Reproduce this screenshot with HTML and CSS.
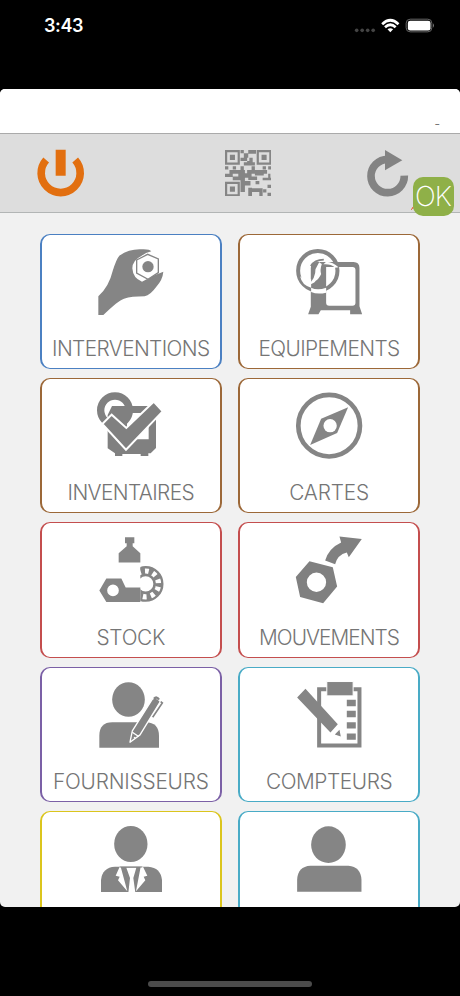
FILE: index.html
```
<!DOCTYPE html>
<html lang="fr">
<head>
<meta charset="utf-8">
<meta name="viewport" content="width=device-width, initial-scale=1">
<title>Menu</title>
<link rel="stylesheet" href="styles.css">
</head>
<body>
<div class="statusbar">
  <span class="clock">3:43</span>
  <svg class="signals" viewBox="1064 50 246 50" aria-hidden="true">
    <g fill="#444"><circle cx="1072" cy="90" r="5.5"/><circle cx="1088.500" cy="90" r="5.500"/><circle cx="1105" cy="90" r="5.500"/><circle cx="1121.500" cy="90" r="5.500"/></g>
    <g fill="none" stroke="#fff" stroke-width="8"><path d="M1148.500 71.500Q1173 48 1197.500 71.500"/><path d="M1157 80.500Q1173 66 1189 80.500"/></g>
    <path fill="#fff" d="M1164.500 87Q1173 80 1181.500 87L1173 95.500Z"/>
    <rect x="1220.500" y="56.500" width="77" height="38" rx="12" fill="none" stroke="#666" stroke-width="3"/>
    <rect x="1225.500" y="61" width="68" height="29.500" rx="7" fill="#fff"/>
    <path fill="#777" d="M1301 69Q1307 76 1301 82Z"/>
  </svg>
</div>
<main class="app">
  <div class="user">-</div>
  <nav class="toolbar">
    <svg class="power" viewBox="108 448 146 146" aria-label="Quitter">
      <path fill="#e26f10" d="M167 450H197V528H167Z"/>
      <path fill="none" stroke="#e26f10" stroke-width="23" d="M138.500 481A58.500 58.500 0 1 0 225.500 481"/>
    </svg>
    <svg class="qr" viewBox="0 0 21 21" shape-rendering="geometricPrecision" aria-label="QR code">
      <g fill="none" stroke="#858585"><path d="M.5.500h5.700v5.700h-5.700zM14.800.500h5.700v5.700h-5.700zM.5 14.800h5.700v5.700h-5.700z"/></g>
      <path fill="#858585" d="M2.200 2.200h2.300v2.300h-2.300zM16.500 2.200h2.300v2.300h-2.300zM2.200 16.500h2.300v2.300h-2.300z
      M7 0h1.500v1.500h-1.500zM10.500 0h3.500v1.700h-3.500zM8.500 1.500h2v2h-2zM7 3.500h3v1.500h-3zM11 3.500h1.500v2h-1.500zM8.500 5.500h5v1.500h-5zM10 5h1v1h-1z
      M0 7.300h1.500v1.500h-1.500zM3.500 7.300h1.500v1.500h-1.500zM7 7.300h1.500v2h-1.500zM12 7.300h1.500v2h-1.500zM17 7.300h1.500v1.500h-1.500zM19.500 7.300h1.500v1.500h-1.500z
      M2 9h7v1.700h-7zM10 9h9v1.700h-9zM0 10.700h3.500v1.500h-3.500zM6 10.500h6v2h-6zM13.500 10.500h4v1h-4z
      M3.500 12h4v1.700h-4zM7 12.500h2v6.500h-2zM10.500 12h4v1.500h-4zM17 12.500h4v1.200h-4zM19.500 10.700h1v2h-1zM9 14h2.500v2h-2.500zM13.800 14h1.700v1.500h-1.700zM19.200 15.700h1.600v1.500h-1.600z
      M10.500 17.300h6.500v1.700h-6.500zM10.500 17h1.700v4h-1.700zM15.500 18h1.500v2.800h-1.500zM19.200 19.300h1.600v1.500h-1.600zM17.200 17.700h1.500v1.500h-1.500z"/>
    </svg>
    <svg class="reload" viewBox="1098 448 130 146" aria-label="Actualiser">
      <path fill="none" stroke="#838383" stroke-width="23" d="M1213 528A50 50 0 1 1 1163 479"/>
      <path fill="#838383" d="M1155 451L1207 482L1155 512Z"/>
    </svg>
    <span class="badge">OK</span>
    <svg class="mark" viewBox="0 0 4 6" aria-hidden="true"><path d="M0 6L3 2M1 4H4" fill="none" stroke="#e6653c"/></svg>
  </nav>
  <section class="menu">
    <a class="card blue">
      <svg class="icon" viewBox="197 62 210 210"><path fill="#858585" d="M204 269V213Q236 184 247 137Q258 101 267 91Q298 70 334 72Q358 71 363 78Q346 82 334 91Q306 105 306 129Q308 159 335 169Q366 150 399 139Q397 163 378 184Q360 209 343 213Q304 213 281 220Q263 226 219 269Z"/><path d="M319 104L352 87L384 101V142L353 162L319 143Z" fill="#fff" stroke="#858585" stroke-width="4"/><circle cx="353" cy="124" r="17" fill="#858585"/></svg>
      <span class="label interventions">INTERVENTIONS</span>
    </a>
    <a class="card brown">
      <svg class="icon" viewBox="192.600 62 210 210"><path fill="#858585" fill-rule="evenodd" d="M243 128Q243 110 261 110H371Q389 110 389 128V243L397 267H361V255H273L266 267H235L243 244ZM289 128V232Q289 241 298 241H368Q377 241 377 232V134Q377 125 368 125H289Z"/><circle cx="264" cy="136" r="59" fill="none" stroke="#858585" stroke-width="12"/><path d="M244 187Q263 197 289 187V202Q263 208 244 200Z" fill="#fff"/><path d="M211 153Q218 162 244 162V187Q216 180 211 153Z" fill="#fff"/><path d="M235 179Q258 158 257 132L268 111L276 116Q270 134 274 146Q267 162 258 166Q252 175 235 179Z" fill="#fff"/><path d="M289 109Q310 110 326 126L317 127Q302 115 281 117Z" fill="#fff"/><path d="M243 122Q254 104 282 103" stroke="#858585" stroke-width="5" fill="none"/></svg>
      <span class="label equipements">EQUIPEMENTS</span>
    </a>
    <a class="card brown">
      <svg class="icon" viewBox="197 60 210 210"><circle cx="254" cy="121" r="43" fill="none" stroke="#808080" stroke-width="22"/><path fill="#808080" fill-rule="evenodd" d="M245 108H362L377 123V234L361 250H354V258H331V252H276V258H254V250L232 235V135ZM290 129V208H355V129Z"/><path fill="#808080" stroke="#fff" stroke-width="6" d="M216 162L244 134L288 174L370 95L397 124L287 239Z"/></svg>
      <span class="label inventaires">INVENTAIRES</span>
    </a>
    <a class="card brown">
      <svg class="icon" viewBox="192.600 60 210 210"><circle cx="298" cy="167" r="92.500" fill="none" stroke="#858585" stroke-width="14"/><path fill="#858585" d="M355 112L274 146L241 225L322 189Z"/><circle cx="301" cy="167" r="20" fill="#fff"/></svg>
      <span class="label cartes">CARTES</span>
    </a>
    <a class="card red">
      <svg class="icon" viewBox="197 58.200 210 210"><path fill="#858585" d="M284 68H312V86H307V95L330 116V144H265V116L289 95V86H284Z"/><clipPath id="bearing"><path d="M330 145H405V270H330Z"/></clipPath><g clip-path="url(#bearing)" fill="none" stroke="#858585"><circle cx="346" cy="208" r="50" stroke-width="7"/><circle cx="346" cy="208" r="27" stroke-width="8"/><circle cx="346" cy="208" r="39" stroke-width="20" stroke-dasharray="13 11.500" stroke-dashoffset="4"/></g><path fill="#858585" fill-rule="evenodd" d="M228 192H273L286 219H330V262H228L207 228ZM248 210A17.500 17.500 0 1 0 248 245A17.500 17.500 0 1 0 248 210Z"/></svg>
      <span class="label stock">STOCK</span>
    </a>
    <a class="card red">
      <svg class="icon" viewBox="192.600 58.200 210 210"><path fill="#808080" fill-rule="evenodd" d="M239 140L309 158L322 216L280 266L211 247L198 187ZM260 174A29 29 0 1 0 260 232A29 29 0 1 0 260 174Z"/><path fill="#808080" d="M286 138Q297 101 334 84L329 66L396 73L357 128L351 114Q323 121 316 149Z"/></svg>
      <span class="label mouvements">MOUVEMENTS</span>
    </a>
    <a class="card purple">
      <svg class="icon" viewBox="197 56.400 210 210"><ellipse cx="294.500" cy="118" rx="49" ry="52" fill="#858585"/><path fill="#858585" d="M207 263V227Q207 186 246 186H346Q386 187 386 227V263Z"/><path fill="#858585" stroke="#fff" stroke-width="4" stroke-linejoin="round" d="M299 246L306 212L366 117Q378 108 390 124L329 224Z"/><path d="M306 216L325 229M311 231L315 234" stroke="#fff" stroke-width="4"/><path d="M391 124L396 128L367 171" fill="none" stroke="#858585" stroke-width="5"/><path d="M371 116Q379 107 386 118" fill="none" stroke="#858585" stroke-width="7"/></svg>
      <span class="label fournisseurs">FOURNISSEURS</span>
    </a>
    <a class="card cyan">
      <svg class="icon" viewBox="192.600 56.400 210 210"><path fill="none" stroke="#858585" stroke-width="12" d="M268 87H389V256H268Z"/><path fill="#858585" stroke="#fff" stroke-width="3" d="M291 64H370V107H291Z"/><path fill="#858585" d="M351 119H378V138H351ZM351 152H378V171H351ZM351 186H378V205H351ZM351 220H378V239H351Z"/><path fill="#fff" d="M302 217L327 190L336 232Z"/><path fill="#858585" d="M227 86L324 192L302 217L202 112ZM329 209L333 229L315 223Z"/></svg>
      <span class="label compteurs">COMPTEURS</span>
    </a>
    <a class="card yellow">
      <svg class="icon" viewBox="287 69 210 210"><ellipse cx="391.500" cy="132" rx="50" ry="54" fill="#858585"/><path fill="#858585" d="M302 276V240Q306 202 344 200H444Q481 203 485 240V276Z"/><path fill="#fff" d="M358 200L346 227L358 230L353 241L381 274L361 200ZM428 200L441 227L430 230L435 241L407 274L421 200ZM378 203H408L399 234L405 278H384L389 234Z"/><path d="M358 201H426" stroke="#858585" stroke-width="3"/></svg>
    </a>
    <a class="card cyan">
      <svg class="icon" viewBox="882.600 69 210 210"><ellipse cx="986" cy="134" rx="52" ry="55" fill="#858585"/><path fill="#858585" d="M892 275V239Q894 199 932 197H1046Q1083 200 1085 239V275Z"/></svg>
    </a>
  </section>
</main>
<div class="home"></div>
</body>
</html>
```
FILE: styles.css
```
* { box-sizing: border-box; }
body {
  margin: 0;
  height: 996px;
  display: flex;
  flex-direction: column;
  overflow: hidden;
  background: #000;
  font-family: Inter, "Liberation Sans", sans-serif;
}
.statusbar {
  flex: none;
  height: 89px;
  padding: 16px 24px 0 44px;
  display: flex;
  justify-content: space-between;
  align-items: flex-start;
  color: #fff;
}
.clock { font-size: 18px; line-height: 20px; font-weight: 600; letter-spacing: -.4px; }
.signals { width: 82px; height: 16.700px; margin-top: .7px; }
.app {
  flex: none;
  height: 818px;
  display: flex;
  flex-direction: column;
  overflow: hidden;
  border-radius: 5px;
  background: #f1f1f1;
}
.user {
  flex: none;
  height: 44px;
  padding: 27px 20px 0;
  background: #fff;
  color: #777;
  text-align: right;
  font-size: 12px;
  line-height: 15px;
}
.toolbar {
  position: relative;
  flex: none;
  height: 80px;
  display: flex;
  align-items: center;
  justify-content: space-between;
  padding: 0 51px 0 36px;
  background: #ddd;
  border-top: 1px solid #aaa;
  border-bottom: 1px solid #b2b5b5;
}
.power { width: 48.700px; height: 48.700px; }
.qr { width: 46.500px; height: 46.500px; margin-left: 46px; }
.reload { width: 43.300px; height: 48.700px; }
.badge {
  position: absolute;
  left: 413px;
  top: 43px;
  z-index: 1;
  width: 41px;
  height: 39px;
  border-radius: 10px;
  background: #8fb048;
  color: #fff;
  text-align: center;
  font-size: 27.500px;
  line-height: 39px;
  font-weight: 250;
  letter-spacing: -1px;
  text-indent: -1px;
}
.mark { position: absolute; left: 411px; top: 70px; width: 4px; height: 6px; }
.menu {
  flex: none;
  display: grid;
  grid-template-columns: 181.600px 181.600px;
  grid-auto-rows: 135.400px;
  gap: 9px 16.700px;
  padding: 20.700px 40px 0;
}
.card {
  display: flex;
  flex-direction: column;
  align-items: center;
  padding-top: 11px;
  background: #fff;
  border: solid;
  border-width: 1.500px 2px;
  border-radius: 10px;
  color: #757575;
}
.icon { flex: none; width: 70px; height: 70px; }
.label {
  margin-top: 20.300px;
  white-space: nowrap;
  font-size: 20.800px;
  line-height: 25px;
  font-weight: 260;
}
.interventions { letter-spacing: -.6px; }
.equipements { letter-spacing: -.6px; }
.inventaires { letter-spacing: -.6px; }
.cartes { letter-spacing: -.15px; }
.stock { letter-spacing: -.3px; }
.mouvements { letter-spacing: -.95px; }
.fournisseurs { letter-spacing: -.2px; }
.compteurs { letter-spacing: -.4px; }
.blue { border-color: #4b80c2; }
.brown { border-color: #9c6838; }
.red { border-color: #c44e4e; }
.purple { border-color: #7b60a6; }
.cyan { border-color: #49abc6; }
.yellow { border-color: #dbc51d; }
.home {
  width: 164px;
  height: 6px;
  margin: 74px auto 0;
  border-radius: 3px;
  background: #4b4b4b;
}
```
